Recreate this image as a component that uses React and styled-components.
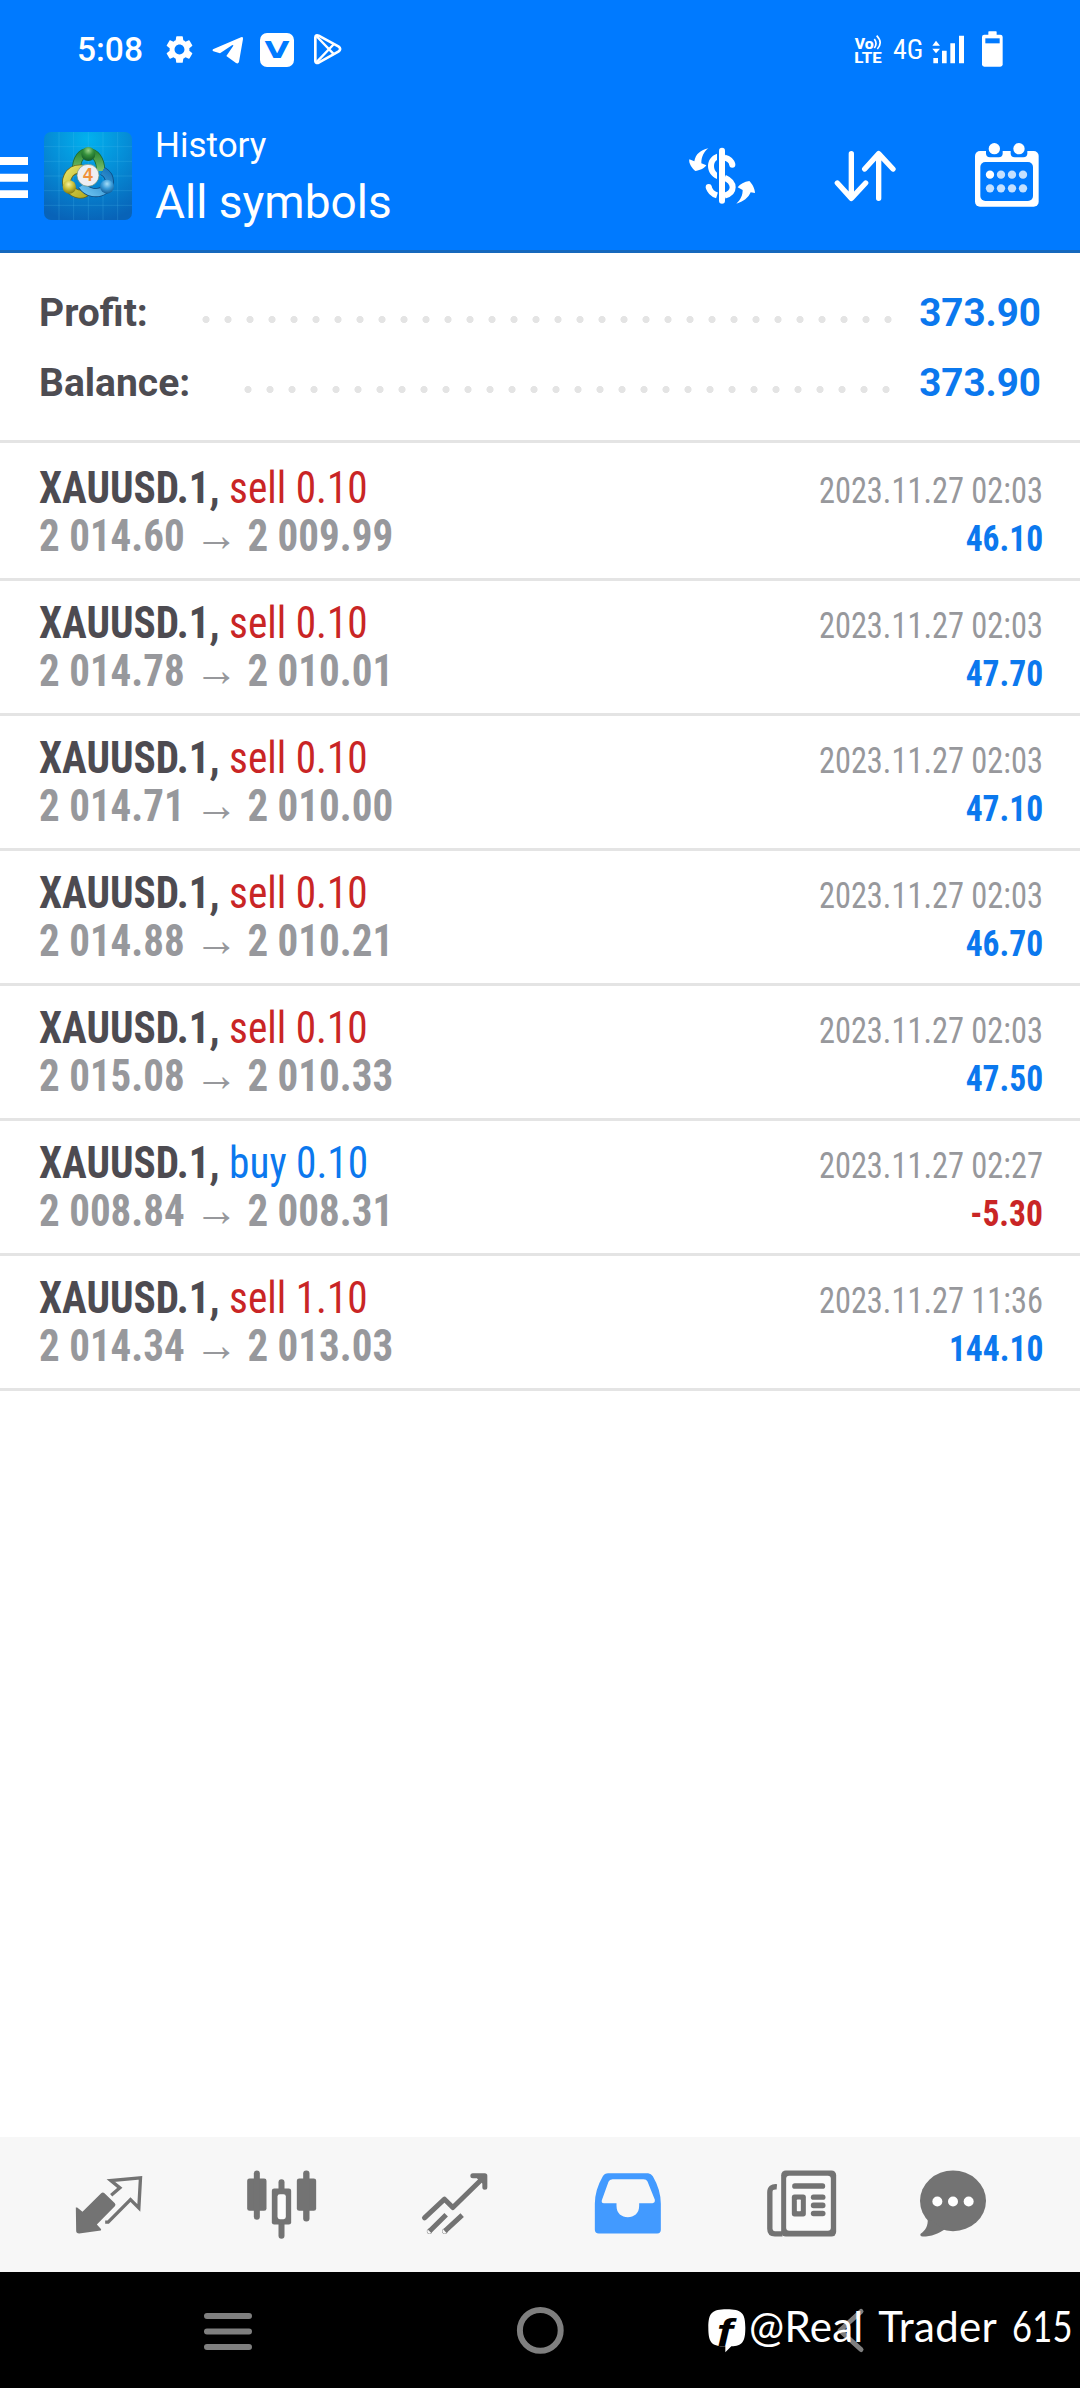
import React from 'react'
import styled, { createGlobalStyle } from 'styled-components'
import { MdSettings } from 'react-icons/md'

const GlobalStyle = createGlobalStyle`
    * {
        box-sizing: border-box;
    }
    body {
        margin: 0;
        background: #fff;
        font-family: Roboto, sans-serif;
    }
    svg {
        display: block;
        flex: none;
    }`

const BLUE = '#007aff'
const VALUE = '#0b78ee'
const RED = '#c92525'

const Screen = styled.div`
    display: flex;
    flex-direction: column;
    width: 1080px;
    height: 2388px;
    overflow: hidden;
    background: #fff;`
const StatusBar = styled.div`
    display: flex;
    flex: none;
    align-items: center;
    justify-content: space-between;
    height: 100px;
    padding: 0 76px 0 77px;
    color: #fff;
    background: ${BLUE};`
const StatusLeft = styled.div`
    display: flex;
    align-items: center;
    gap: 9px;`
const StatusRight = styled.div`
    display: flex;
    align-items: center;`
const Time = styled.div`
    width: 73px;
    font-size: 33.5px;
    font-weight: 500;
    line-height: 100px;`
const GearCell = styled.div`
    display: flex;
    align-items: center;
    justify-content: center;
    width: 40px;
    margin-top: -2px;`
const BadgeCell = styled.div`
    display: flex;
    align-items: center;
    justify-content: center;
    width: 34px;
    height: 34px;
    margin: -1px 3px 0;
    border-radius: 7px;
    background: #fff;
    color: ${BLUE};`
const BadgeLetter = styled.span`
    font-family: "DejaVu Sans", sans-serif;
    font-size: 23px;
    font-weight: 700;
    line-height: 34px;
    transform: scaleX(1.4);`
const Network = styled.div`
    width: 30px;
    margin: 0 7px 0 9px;
    font-family: "Roboto Condensed", sans-serif;
    font-size: 28px;
    line-height: 100px;`
const BatteryCell = styled.div`
    margin-left: 14px;`

const Header = styled.header`
    display: flex;
    flex: none;
    align-items: center;
    height: 153px;
    border-bottom: 3px solid #1568bd;
    color: #fff;
    background: ${BLUE};`
const Logo = styled.svg`
    margin: 2px 23px 0 16px;
    border-radius: 7px;`
const Titles = styled.div`
    display: flex;
    flex: 1;
    flex-direction: column;
    gap: 6px;
    margin-top: 4px;`
const Title = styled.div`
    font-size: 35px;
    line-height: 44px;`
const Subtitle = styled.div`
    font-size: 46px;
    line-height: 56px;`
const Actions = styled.div`
    display: flex;
    padding-right: 3px;`
const Action = styled.div`
    display: flex;
    justify-content: center;
    width: 142px;`

const Summary = styled.section`
    flex: none;
    height: 190px;
    padding: 25px 39px 22px;
    border-bottom: 3px solid #e4e4e4;`
const SummaryRow = styled.div`
    display: flex;
    height: 70px;
    font-size: 39px;
    font-weight: 700;
    line-height: 70px;`
const SummaryLabel = styled.span`
    color: #4d4c52;`
const Dots = styled.span`
    flex: 1;
    margin: 0 15px 0 47px;
    background-image: radial-gradient(circle at 11px 41.5px, #e4e4e4 3.2px, transparent 3.9px);
    background-size: 22px 70px;
    background-repeat: repeat-x;`
const SummaryValue = styled.span`
    color: ${VALUE};
    font-size: 38.6px;`

const Trades = styled.main`
    flex: 1;
    padding-top: 3px;`
const Trade = styled.div`
    height: 135px;
    padding: 18px 37px 0 39px;
    border-bottom: 3px solid #e4e4e4;
    font-family: "Roboto Condensed", sans-serif;`
const TradeLine = styled.div`
    display: flex;
    align-items: baseline;
    justify-content: space-between;
    height: 48px;
    font-size: 44px;
    line-height: 48px;
    white-space: pre;`
const Symbol = styled.span`
    color: #4d4b51;
    font-weight: 700;
    transform: scaleX(0.938);
    transform-origin: left;`
const Side = styled.span`
    color: ${props => props.$side === 'buy' ? VALUE : RED};
    font-weight: 400;`
const Prices = styled.span`
    color: #97989c;
    font-weight: 700;
    transform: scaleX(0.932);
    transform-origin: left;`
const Arrow = styled.span`
    font-size: 47px;
    line-height: 0;`
const Closed = styled.span`
    color: #97989c;
    font-size: 36px;
    font-weight: 400;
    transform: scaleX(0.9);
    transform-origin: right;`
const Profit = styled.span`
    color: ${props => props.$loss ? RED : VALUE};
    font-size: 36px;
    font-weight: 700;
    transform: scaleX(0.932);
    transform-origin: right;`

const TabBar = styled.nav`
    display: flex;
    flex: none;
    align-items: center;
    height: 135px;
    padding-left: 22px;
    color: #737373;
    background: #f7f7f7;`
const Tab = styled.div`
    display: flex;
    justify-content: center;
    width: ${props => props.$width || 173}px;
    color: ${props => props.$active ? '#429aff' : 'inherit'};`

const NavBar = styled.div`
    position: relative;
    display: flex;
    flex: none;
    align-items: center;
    gap: 252px;
    height: 116px;
    padding-left: 198px;
    background: #000;`
const Watermark = styled.div`
    position: absolute;
    top: 27px;
    left: 708px;
    display: flex;
    height: 54px;
    color: #fff;`
const WatermarkLogo = styled.svg`
    margin-top: 10px;`
const WatermarkText = styled.span`
    margin-left: 3px;
    font-family: Lato, sans-serif;
    font-size: 42px;
    line-height: 54px;
    letter-spacing: 0.3px;
    word-spacing: 5px;
    white-space: nowrap;`
const WatermarkNumber = styled.span`
    display: inline-block;
    width: 60px;
    transform: scaleX(0.82);
    transform-origin: left;`

const TelegramIcon = () => (
    <svg width="40" height="40" viewBox="625 90 120 120" fill="#fff">
        <path d="M640 148 L724 112 Q731 109 730 117 L718 185 Q716 193 709 189 L680 168 L700 139 Q703 133 697 136 L661 160 L641 154 Q636 151 640 148Z" />
    </svg>
)
const PlayIcon = () => (
    <svg width="40" height="40" viewBox="919 90 120 120" fill="none" stroke="#fff" strokeWidth="8" strokeLinejoin="round">
        <path d="M947 112 Q948 103 957 107 L1016 139 Q1027 147 1016 155 L957 188 Q948 191 947 183Z" />
        <path d="M950 108 L1003 163 M950 187 L1003 132" strokeWidth="7" />
    </svg>
)
const VolteIcon = () => (
    <svg width="30" height="40" viewBox="582 90 90 120" fill="#fff">
        <text x="584" y="146" fontFamily="Roboto" fontWeight="800" fontSize="43" textLength="57" lengthAdjust="spacingAndGlyphs">Vo</text>
        <text x="583" y="189" fontFamily="Roboto" fontWeight="800" fontSize="45" textLength="82" lengthAdjust="spacingAndGlyphs">LTE</text>
        <path d="M643 117 Q653 130 643 144 M650 107 Q670 128 652 147" fill="none" stroke="#fff" strokeWidth="5" />
    </svg>
)
const SignalIcon = () => (
    <svg width="36" height="40" viewBox="810 90 108 120" fill="#fff">
        <path d="M817 137 L828 122 L840 137Z M817 146 H840 L828 160Z" />
        <path d="M820 174h14v16h-14z M846 152h14v38h-14z M871 130h14v60h-14z M897 107h15v83h-15z" />
    </svg>
)
const BatteryIcon = () => (
    <svg width="24" height="40" viewBox="960 90 72 120" fill="#fff">
        <rect x="985" y="94" width="25" height="14" rx="2" />
        <rect x="966" y="104" width="62" height="96" rx="7" />
        <rect x="976" y="115" width="43" height="15" fill={BLUE} />
    </svg>
)

const MenuIcon = () => (
    <svg width="28" height="50" viewBox="0 450 84 150" fill="#fff">
        <path d="M0 471h84v24H0z M0 521h84v24H0z M0 571h84v23H0z" />
    </svg>
)
const AppLogo = () => (
    <Logo width="88" height="88" viewBox="132 397 264 264">
        <defs>
            <radialGradient id="sky" cx="50%" cy="8%" r="95%">
                <stop offset="0" stopColor="#02b1ee" />
                <stop offset="0.45" stopColor="#058fd8" />
                <stop offset="1" stopColor="#0863b8" />
            </radialGradient>
            <linearGradient id="green" x1="0" y1="0" x2="0" y2="1">
                <stop offset="0" stopColor="#2f8a35" />
                <stop offset="1" stopColor="#7cc26d" />
            </linearGradient>
            <linearGradient id="yellow" x1="0" y1="0" x2="1" y2="1">
                <stop offset="0" stopColor="#e3df62" />
                <stop offset="1" stopColor="#b5ac22" />
            </linearGradient>
            <linearGradient id="blue" x1="0" y1="1" x2="1" y2="0">
                <stop offset="0" stopColor="#6cc4f2" />
                <stop offset="1" stopColor="#1a78bd" />
            </linearGradient>
            <radialGradient id="ballGreen" cx="50%" cy="25%" r="70%">
                <stop offset="0" stopColor="#9ad48a" />
                <stop offset="0.5" stopColor="#35913c" />
                <stop offset="1" stopColor="#17602a" />
            </radialGradient>
            <radialGradient id="ballYellow" cx="45%" cy="30%" r="70%">
                <stop offset="0" stopColor="#f6f3a0" />
                <stop offset="0.5" stopColor="#c9c03a" />
                <stop offset="1" stopColor="#867c10" />
            </radialGradient>
            <radialGradient id="ballBlue" cx="50%" cy="30%" r="70%">
                <stop offset="0" stopColor="#a4ddf8" />
                <stop offset="0.5" stopColor="#3a9bd8" />
                <stop offset="1" stopColor="#145c96" />
            </radialGradient>
        </defs>
        <rect x="132" y="397" width="264" height="264" fill="url(#sky)" />
        <path d="M177 397v264 M221 397v264 M265 397v264 M309 397v264 M353 397v264 M132 441h264 M132 485h264 M132 529h264 M132 573h264 M132 617h264" stroke="#5cc8f5" strokeOpacity="0.2" strokeWidth="3" />
        <g fill="none">
            <path d="M230 512 C226 440 303 440 302 514" stroke="#1d6b35" strokeWidth="27" />
            <path d="M230 512 C226 440 303 440 302 514" stroke="url(#green)" strokeWidth="22" />
            <path d="M247 508 C202 505 190 550 207 566 C225 584 246 590 262 574" stroke="#6b681a" strokeWidth="27" />
            <path d="M247 508 C202 505 190 550 207 566 C225 584 246 590 262 574" stroke="url(#yellow)" strokeWidth="22" />
            <path d="M308 514 C338 532 330 560 314 570 C292 586 262 580 246 557" stroke="#0d4a80" strokeWidth="27" />
            <path d="M308 514 C338 532 330 560 314 570 C292 586 262 580 246 557" stroke="url(#blue)" strokeWidth="22" />
        </g>
        <circle cx="265" cy="463" r="21" fill="url(#ballGreen)" />
        <circle cx="208" cy="562" r="20" fill="url(#ballYellow)" />
        <circle cx="321" cy="561" r="21" fill="url(#ballBlue)" />
        <circle cx="264" cy="527" r="33" fill="#eeeef2" stroke="#6a8d74" strokeWidth="2" />
        <text x="264" y="545" textAnchor="middle" fontFamily="Liberation Sans" fontWeight="700" fontSize="53" fill="#f0913c">4</text>
    </Logo>
)
const DollarIcon = () => (
    <svg width="80" height="80" viewBox="66 405 240 240" fill="#fff">
        <rect x="177" y="443" width="18" height="168" rx="9" />
        <path d="M171 461 C153 467 144 482 144 498 C144 515 154 530 171 537 V518 C165 513 162 506 162 498 C162 490 165 484 171 480Z" />
        <g fill="none" stroke="#fff" strokeWidth="18">
            <path d="M194 473 Q213 477 217 494" />
            <path d="M194 533 C226 547 226 578 194 587" />
            <path d="M146 561 Q151 580 171 586" />
        </g>
        <circle cx="217" cy="494" r="9" />
        <circle cx="146" cy="561" r="9" />
        <path d="M145 445 C122 450 107 462 103 484 L88 478 C85 490 97 506 106 513 C118 512 132 506 139 496 L124 490 C124 470 132 455 145 445Z" />
        <path d="M229 611 C243 598 248 585 248 570 L233 562 C240 552 253 545 268 543 C275 550 285 565 285 579 L272 577 C266 592 250 606 229 611Z" />
    </svg>
)
const SortIcon = () => (
    <svg width="80" height="80" viewBox="492 405 240 240" fill="none" stroke="#fff" strokeWidth="16" strokeLinecap="round" strokeLinejoin="round">
        <path d="M574 461 V594 M532 549 L574 595 L617 549" />
        <path d="M656 595 V462 M614 507 L656 461 L699 507" />
    </svg>
)
const CalendarIcon = () => (
    <svg width="80" height="80" viewBox="918 405 240 240" fill="#fff">
        <rect x="945" y="453" width="191" height="167" rx="15" />
        <rect x="978" y="430" width="50" height="42" rx="12" fill={BLUE} />
        <rect x="1052" y="430" width="50" height="42" rx="12" fill={BLUE} />
        <circle cx="1003" cy="446" r="17" />
        <circle cx="1077" cy="446" r="17" />
        <rect x="961" y="486" width="158" height="117" rx="15" fill={BLUE} />
        {[524, 565].map(cy => [990, 1023, 1056, 1089].map(cx => (
            <circle key={cx + '-' + cy} cx={cx} cy={cy} r="12.5" opacity={cx === 990 && cy === 524 ? 1 : 0.77} />
        )))}
    </svg>
)

const QuotesIcon = () => (
    <svg width="80" height="80" viewBox="25.5 43.5 240 240" fill="currentColor">
        <path d="M122 128 Q127 124 132 128 L163 158 Q167 162 163 167 L109 222 L122 236 L121 240 L56 249 Q47 249 47 241 L46 171 L50 171 L66 184Z" />
        <path d="M152 134 L178 112 L151 90 L240 82 L235 172 L210 147 L143 215 H134" fill="none" stroke="currentColor" strokeWidth="10" />
    </svg>
)
const ChartIcon = () => (
    <svg width="80" height="80" viewBox="544.5 43.5 240 240" fill="currentColor">
        <rect x="560" y="84" width="58" height="97" rx="7" />
        <rect x="580" y="60" width="18" height="148" rx="9" />
        <rect x="709" y="84" width="58" height="97" rx="7" />
        <rect x="728" y="60" width="19" height="153" rx="9" />
        <rect x="654" y="86" width="18" height="179" rx="9" />
        <rect x="634" y="114" width="58" height="108" rx="7" />
        <rect x="651" y="131" width="25" height="75" rx="7" fill="#fbfbfb" />
    </svg>
)
const TrendIcon = () => (
    <svg width="80" height="80" viewBox="43.5 43.5 240 240" fill="none" stroke="currentColor" strokeWidth="15" strokeLinejoin="round">
        <path d="M72 202 L132 146 L157 171 L250 80 M217 76 H253 V110" strokeLinecap="round" />
        <path d="M236 80 L252 80 L252 94Z" />
        <path d="M87 242 L137 193 M133 242 L185 194" />
        <circle cx="87" cy="242" r="0.5" />
        <circle cx="133" cy="242" r="0.5" />
    </svg>
)
const TrayIcon = () => (
    <svg width="80" height="80" viewBox="562.5 43.5 240 240" fill="currentColor" fillRule="evenodd">
        <path d="M623 68 H743 Q752 69 757 77 Q781 118 781 160 V238 Q781 249 770 249 H595 Q583 249 583 238 V160 Q583 118 607 77 Q612 68 623 68Z M636 86 H729 Q738 86 741 93 L763 148 Q764 158 756 158 H716 V166 C716 190 700 200 682 200 C664 200 648 190 648 166 V158 H610 Q602 158 604 149 L624 94 Q627 86 636 86Z" />
    </svg>
)
const NewsIcon = () => (
    <svg width="80" height="80" viewBox="211.5 43.5 240 240" fill="currentColor">
        <path d="M259 109 Q238 107 238 125 V235 Q238 250 253 250 H276" fill="none" stroke="currentColor" strokeWidth="16" />
        <rect x="272" y="60" width="165" height="198" rx="14" />
        <rect x="287" y="76" width="134" height="165" rx="9" fill="#fafafa" />
        <rect x="305" y="98" width="99" height="17" rx="8" />
        <rect x="304" y="132" width="42" height="66" rx="8" />
        <rect x="319" y="147" width="12" height="35" rx="2" fill="#fafafa" />
        <rect x="361" y="132" width="44" height="16" rx="8" />
        <rect x="361" y="156" width="44" height="17" rx="8" />
        <rect x="361" y="181" width="44" height="16" rx="8" />
    </svg>
)
const ChatIcon = () => (
    <svg width="80" height="80" viewBox="669 43.5 240 240" fill="currentColor">
        <ellipse cx="789" cy="151" rx="99" ry="91" />
        <path d="M713 205 C715 226 706 240 692 250 Q688 257 698 258 C725 258 745 249 765 236Z" />
        <g fill="#fff">
            <circle cx="742" cy="153" r="15" />
            <circle cx="789" cy="153" r="15" />
            <circle cx="836" cy="153" r="15" />
        </g>
    </svg>
)

const RecentsIcon = () => (
    <svg width="60" height="60" viewBox="-30 -30 60 60" stroke="#7f7f7f" strokeWidth="6" strokeLinecap="round">
        <path d="M-21 -14 H21 M-21 1.5 H21 M-21 17 H21" />
    </svg>
)
const HomeIcon = () => (
    <svg width="60" height="60" viewBox="-30 -30 60 60" fill="none" stroke="#7f7f7f" strokeWidth="6">
        <circle cx="0.3" cy="0.4" r="20.4" />
    </svg>
)
const BackIcon = () => (
    <svg width="60" height="60" viewBox="-30 -30 60 60" fill="none" stroke="#7f7f7f" strokeWidth="5" strokeLinecap="round" strokeLinejoin="round">
        <path d="M9 -18.5 L-12 0.5 L9 19.5" />
    </svg>
)
const WatermarkIcon = () => (
    <WatermarkLogo width="38" height="52" viewBox="54 476 114 156">
        <path d="M110 477 C155 477 166 488 166 532 C166 574 157 587 124 588 L106 606 V588 C65 588 55 577 55 532 C55 488 66 477 110 477Z" fill="#fff" />
        <text x="80" y="588" fontFamily="Liberation Sans" fontWeight="700" fontStyle="italic" fontSize="116" textLength="48" lengthAdjust="spacingAndGlyphs" fill="#000">f</text>
    </WatermarkLogo>
)

const trades = [
    { side: 'sell', volume: '0.10', open: '2 014.60', close: '2 009.99', time: '2023.11.27 02:03', profit: '46.10' },
    { side: 'sell', volume: '0.10', open: '2 014.78', close: '2 010.01', time: '2023.11.27 02:03', profit: '47.70' },
    { side: 'sell', volume: '0.10', open: '2 014.71', close: '2 010.00', time: '2023.11.27 02:03', profit: '47.10' },
    { side: 'sell', volume: '0.10', open: '2 014.88', close: '2 010.21', time: '2023.11.27 02:03', profit: '46.70' },
    { side: 'sell', volume: '0.10', open: '2 015.08', close: '2 010.33', time: '2023.11.27 02:03', profit: '47.50' },
    { side: 'buy', volume: '0.10', open: '2 008.84', close: '2 008.31', time: '2023.11.27 02:27', profit: '-5.30' },
    { side: 'sell', volume: '1.10', open: '2 014.34', close: '2 013.03', time: '2023.11.27 11:36', profit: '144.10' },
]

const TradeItem = ({ trade }) => (
    <Trade>
        <TradeLine>
            <Symbol>XAUUSD.1, <Side $side={trade.side}>{trade.side} {trade.volume}</Side></Symbol>
            <Closed>{trade.time}</Closed>
        </TradeLine>
        <TradeLine>
            <Prices>{trade.open} <Arrow>→</Arrow> {trade.close}</Prices>
            <Profit $loss={trade.profit.startsWith('-')}>{trade.profit}</Profit>
        </TradeLine>
    </Trade>
)

const App = () => (
    <Screen>
        <GlobalStyle />
        <StatusBar>
            <StatusLeft>
                <Time>5:08</Time>
                <GearCell><MdSettings size={33} /></GearCell>
                <TelegramIcon />
                <BadgeCell><BadgeLetter>V</BadgeLetter></BadgeCell>
                <PlayIcon />
            </StatusLeft>
            <StatusRight>
                <VolteIcon />
                <Network>4G</Network>
                <SignalIcon />
                <BatteryCell><BatteryIcon /></BatteryCell>
            </StatusRight>
        </StatusBar>
        <Header>
            <MenuIcon />
            <AppLogo />
            <Titles>
                <Title>History</Title>
                <Subtitle>All symbols</Subtitle>
            </Titles>
            <Actions>
                <Action><DollarIcon /></Action>
                <Action><SortIcon /></Action>
                <Action><CalendarIcon /></Action>
            </Actions>
        </Header>
        <Summary>
            <SummaryRow>
                <SummaryLabel>Profit:</SummaryLabel>
                <Dots />
                <SummaryValue>373.90</SummaryValue>
            </SummaryRow>
            <SummaryRow>
                <SummaryLabel>Balance:</SummaryLabel>
                <Dots />
                <SummaryValue>373.90</SummaryValue>
            </SummaryRow>
        </Summary>
        <Trades>
            {trades.map((trade, index) => <TradeItem key={index} trade={trade} />)}
        </Trades>
        <TabBar>
            <Tab><QuotesIcon /></Tab>
            <Tab><ChartIcon /></Tab>
            <Tab><TrendIcon /></Tab>
            <Tab $active><TrayIcon /></Tab>
            <Tab><NewsIcon /></Tab>
            <Tab $width={132}><ChatIcon /></Tab>
        </TabBar>
        <NavBar>
            <RecentsIcon />
            <HomeIcon />
            <BackIcon />
            <Watermark>
                <WatermarkIcon />
                <WatermarkText>@Real Trader <WatermarkNumber>615</WatermarkNumber></WatermarkText>
            </Watermark>
        </NavBar>
    </Screen>
)

export default App
